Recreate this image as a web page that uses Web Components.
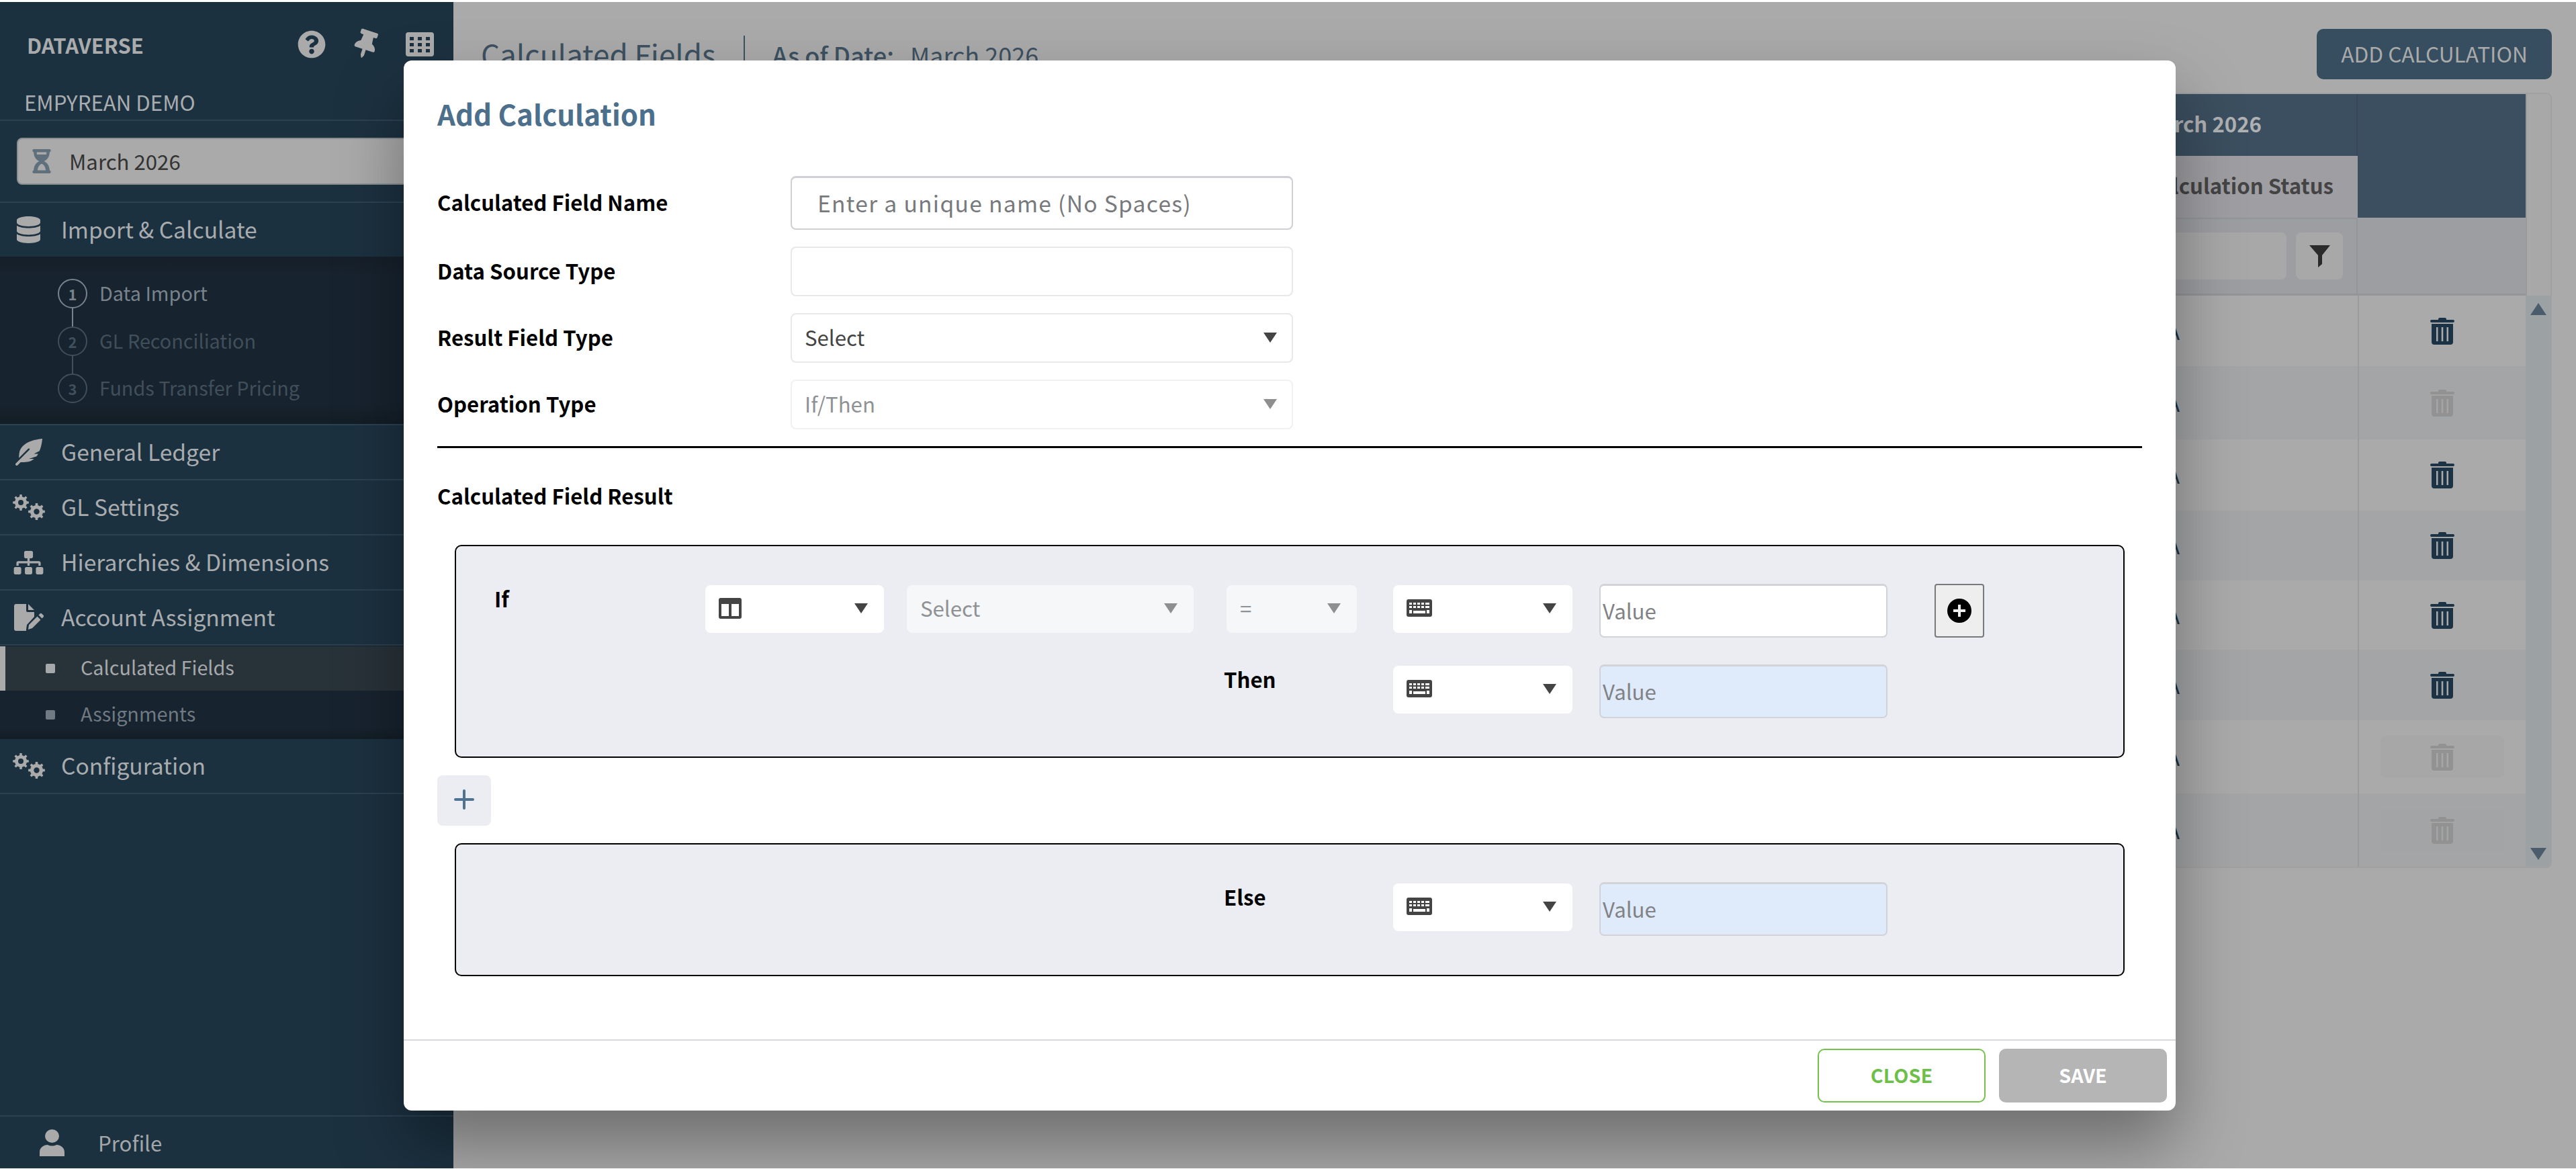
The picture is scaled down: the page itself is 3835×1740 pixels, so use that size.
<!DOCTYPE html>
<html>
<head>
<meta charset="utf-8">
<title>Calculated Fields</title>
<style>
html, body { margin: 0; height: 100%; background: #fff; overflow: hidden; }
body { font-family: "Noto Sans CJK SC", "Noto Sans", sans-serif; }
</style>
</head>
<body>
<app-shell></app-shell>

<script>
const FONT = '"Noto Sans CJK SC", "Noto Sans", sans-serif';

// toothed ring, used for the two sizes of the settings icon
const gear = (cx, cy, outer, inner, hole, teeth) => {
  let d = '';
  const step = Math.PI * 2 / teeth;
  for (let i = 0; i < teeth; i++) {
    const a = i * step;
    const pts = [[inner, a - step * .5], [inner, a - step * .27], [outer, a - step * .17], [outer, a + step * .17], [inner, a + step * .27]];
    for (const [r, t] of pts) {
      d += (d ? 'L' : 'M') + (cx + r * Math.cos(t)).toFixed(2) + ' ' + (cy + r * Math.sin(t)).toFixed(2);
    }
  }
  d += `ZM${cx + hole} ${cy}A${hole} ${hole} 0 1 0 ${cx - hole} ${cy}A${hole} ${hole} 0 1 0 ${cx + hole} ${cy}Z`;
  return d;
};

const icons = {
  help: '<svg viewBox="0 0 496 512" width="42" height="42"><path fill="currentColor" d="M504 256c0 137-111 248-248 248S8 393 8 256 119 8 256 8s248 111 248 248zM262.700 90c-54.500 0-89.300 23-116.600 63.800-3.500 5.300-2.400 12.400 2.700 16.300l34.700 26.300c5.200 3.900 12.600 3 16.700-2.100 17.900-22.700 30.100-35.800 57.300-35.800 20.400 0 45.700 13.100 45.700 33 0 15-12.400 22.700-32.600 34-23.600 13.200-54.800 29.700-54.800 70.900V300c0 6.600 5.400 12 12 12h56c6.600 0 12-5.400 12-12v-1.300c0-28.600 83.500-29.800 83.500-107.100C379.900 133.400 319.400 90 262.700 90zM256 339c-25.500 0-46.200 20.700-46.200 46.200s20.700 46.200 46.200 46.200 46.200-20.700 46.200-46.200S281.500 339 256 339z" transform="translate(-8 0)"/></svg>',
  pin: '<svg viewBox="0 0 384 512" width="33" height="42" style="transform:rotate(18deg)"><path fill="currentColor" d="M298 214.400 285.800 96H328c13.300 0 24-10.700 24-24V24c0-13.300-10.700-24-24-24H56C42.700 0 32 10.700 32 24v48c0 13.300 10.700 24 24 24h42.200L86 214.400C37.500 237 0 277.600 0 328c0 13.300 10.700 24 24 24h136v104c0 1.200.2 2.500.8 3.600l24 48c2.900 5.900 11.400 6 14.300 0l24-48c.6-1.100.8-2.400.9-3.600V352h136c13.300 0 24-10.700 24-24 0-50.900-38-91.200-86-113.600z"/></svg>',
  grid: '<svg viewBox="0 0 42 36" width="42" height="36"><path fill="currentColor" fill-rule="evenodd" d="M4 0h34a4 4 0 0 1 4 4v28a4 4 0 0 1-4 4H4a4 4 0 0 1-4-4V4a4 4 0 0 1 4-4zM6 7v5h6V7zm12 0v5h6V7zm12 0v5h6V7zM6 16v5h6v-5zm12 0v5h6v-5zm12 0v5h6v-5zM6 25v5h6v-5zm12 0v5h6v-5zm12 0v5h6v-5z"/></svg>',
  hourglass: '<svg viewBox="0 0 384 512" width="28" height="36"><path fill="currentColor" fill-rule="evenodd" d="M24 0h336c13.300 0 24 10.700 24 24v16c0 13.300-10.700 24-24 24 0 91-51 167.800-120.800 192C309 280.200 360 357 360 448c13.300 0 24 10.700 24 24v16c0 13.300-10.700 24-24 24H24c-13.300 0-24-10.700-24-24v-16c0-13.300 10.700-24 24-24 0-91 51-167.800 120.800-192C75 231.800 24 155 24 64 10.700 64 0 53.300 0 40V24C0 10.700 10.700 0 24 0zm64 64c0 17 2 33 5.600 48h196.800c3.600-15 5.600-31 5.600-48zm192 384c-6-62-44-136-88-136s-82 74-88 136z"/></svg>',
  db: '<svg viewBox="0 0 448 512" width="35" height="40"><path fill="currentColor" d="M448 73v46c0 40-100 73-224 73S0 159 0 119V73C0 33 100 0 224 0s224 33 224 73zm0 103v103c0 40-100 73-224 73S0 319 0 279V176c48 33 136 49 224 49s176-16 224-49zm0 160v103c0 40-100 73-224 73S0 479 0 439V336c48 33 136 49 224 49s176-16 224-49z"/></svg>',
  feather: '<svg viewBox="0 0 512 512" width="40" height="40"><path fill="currentColor" d="M512 0C460.220 3.560 96.440 38.200 71.010 287.610c-3.090 26.660-4.840 53.440-5.990 80.240l178.870-178.690c6.250-6.250 16.400-6.250 22.650 0s6.250 16.380 0 22.630L7.040 471.030c-9.380 9.370-9.380 24.570 0 33.940 9.380 9.370 24.590 9.370 33.980 0l57.130-57.070c42.090-.14 84.150-2.530 125.960-7.360 53.480-5.440 97.020-26.470 132.580-56.540H255.740l146.790-48.880c11.250-14.890 21.370-30.710 30.450-47.120h-81.140l106.540-53.210C500.290 132.860 510.190 26.260 512 0z"/></svg>',
  cogs: `<svg viewBox="0 0 48 38" width="48" height="38"><path fill="currentColor" fill-rule="evenodd" d="${gear(12, 12, 12, 9, 4, 8)}${gear(35.500, 25.500, 12.500, 9.500, 4.200, 8)}"/></svg>`,
  sitemap: '<svg viewBox="0 0 640 512" width="45" height="35"><path fill="currentColor" d="M128 352H32c-17.700 0-32 14.300-32 32v96c0 17.700 14.300 32 32 32h96c17.700 0 32-14.300 32-32v-96c0-17.700-14.300-32-32-32zm-24-80h192v48h48v-48h192v48h48v-57.600c0-21.200-17.200-38.400-38.400-38.400H344v-64h40c17.700 0 32-14.300 32-32V32c0-17.700-14.300-32-32-32H256c-17.700 0-32 14.300-32 32v96c0 17.700 14.300 32 32 32h40v64H94.400C73.200 224 56 241.200 56 262.400V320h48zm264 80h-96c-17.700 0-32 14.300-32 32v96c0 17.700 14.300 32 32 32h96c17.700 0 32-14.300 32-32v-96c0-17.700-14.300-32-32-32zm240 0h-96c-17.700 0-32 14.300-32 32v96c0 17.700 14.300 32 32 32h96c17.700 0 32-14.300 32-32v-96c0-17.700-14.300-32-32-32z"/></svg>',
  sign: '<svg viewBox="0 0 44 40" width="44" height="40"><path fill="currentColor" d="M3 0h15v10a2 2 0 0 0 2 2h10v7L19 31l-1 7 0 2H3a3 3 0 0 1-3-3V3a3 3 0 0 1 3-3zM21 0l9 9h-9zM38.500 14.500a2 2 0 0 1 2.800 0l2.200 2.200a2 2 0 0 1 0 2.800l-2 2-5-5zM34.500 18.500l5 5L27 36l-6 2 1-7z"/></svg>',
  person: '<svg viewBox="0 0 37 40" width="37" height="40"><ellipse cx="18.500" cy="10" rx="10.500" ry="10" fill="currentColor"/><path fill="currentColor" d="M0 40v-6c0-7 6-11 12-11 2 1 4 1.500 6.500 1.500S23 24 25 23c6 0 12 4 12 11v6z"/></svg>',
  table: '<svg viewBox="0 0 34 31" width="34" height="31"><path fill="currentColor" fill-rule="evenodd" d="M3 0h28a3 3 0 0 1 3 3v25a3 3 0 0 1-3 3H3a3 3 0 0 1-3-3V3a3 3 0 0 1 3-3zm1 9v18h11V9zm15 0v18h11V9z"/></svg>',
  keyboard: '<svg viewBox="0 0 38 26" width="38" height="26"><path fill="currentColor" fill-rule="evenodd" d="M3 0h32a3 3 0 0 1 3 3v20a3 3 0 0 1-3 3H3a3 3 0 0 1-3-3V3a3 3 0 0 1 3-3zM4 5v3h4V5zm6 0v3h4V5zm6 0v3h4V5zm6 0v3h4V5zm6 0v3h6V5zM4 10v3h4v-3zm6 0v3h4v-3zm6 0v3h4v-3zm6 0v3h4v-3zm6 0v3h6v-3zM4 16v5h4v-5zm6 1v4h18v-4zm20-1v5h4v-5z"/></svg>',
  funnel: '<svg viewBox="0 0 31 33" width="31" height="33"><path fill="currentColor" d="M0 0h31L19 15v13l-6 5V15z"/></svg>',
  trash: '<svg viewBox="0 0 36 40" width="36" height="40"><path fill="currentColor" fill-rule="evenodd" d="M12 2a2 2 0 0 1 2-2h8a2 2 0 0 1 2 2v1h10a2 2 0 0 1 2 2 2 2 0 0 1-2 2H2a2 2 0 0 1-2-2 2 2 0 0 1 2-2h10zM2 9h32v27a4 4 0 0 1-4 4H6a4 4 0 0 1-4-4zm7 5v21h2.500V14zm7.700 0v21h2.600V14zM24.500 14v21H27V14z"/></svg>',
  addCircle: '<svg viewBox="0 0 36 36" width="36" height="36"><path fill="currentColor" fill-rule="evenodd" d="M18 0a18 18 0 1 1 0 36 18 18 0 0 1 0-36zm-2 9v7H9v4h7v7h4v-7h7v-4h-7V9z"/></svg>',
  plus: '<svg viewBox="0 0 30 30" width="30" height="30"><path fill="none" stroke="currentColor" stroke-width="4" stroke-linecap="round" d="M15 2v26M2 15h26"/></svg>'
};

class NavItem extends HTMLElement {
  constructor() {
    super();
    const root = this.attachShadow({ mode: 'open' });
    root.innerHTML = `
<style>
:host { display: block; }
.row {
  height: ${this.hasAttribute('short') ? 80 : 82}px; box-sizing: border-box; display: flex; align-items: center;
  border-bottom: 2px solid #2c4252; background: #1c3140;
  color: #a8acae; font: 400 33.6px/1 ${FONT};
}
:host([short]) .row { border-bottom: 0; }
.ico { width: 91px; padding-right: 6px; box-sizing: border-box; display: flex; justify-content: center; color: #aaa; }
.txt { padding-bottom: 3px; }
</style>
<div class="row"><span class="ico">${icons[this.getAttribute('icon')]}</span><span class="txt"><slot></slot></span></div>`;
  }
}

class NavStep extends HTMLElement {
  constructor() {
    super();
    const root = this.attachShadow({ mode: 'open' });
    const last = this.hasAttribute('last');
    root.innerHTML = `
<style>
:host { display: block; height: 70.500px; }
.step { display: flex; height: 70px; padding-left: 86px; color: ${this.hasAttribute('off') ? '#414f5a' : '#79838b'}; position: relative; }
.num { width: 44px; height: 44px; box-sizing: border-box; border: 2px solid currentColor; border-radius: 50%;
  display: flex; align-items: center; justify-content: center; font: 700 22px/1 ${FONT}; }
.line { position: absolute; left: 107px; top: 43px; width: 2px; height: 28px; background: currentColor; display: ${last ? 'none' : 'block'}; }
.txt { margin-left: 18px; font: 400 28.8px/41px ${FONT}; }
</style>
<div class="step"><span class="num">${this.getAttribute('n')}</span><span class="line"></span><span class="txt"><slot></slot></span></div>`;
  }
}

class NavSub extends HTMLElement {
  constructor() {
    super();
    const root = this.attachShadow({ mode: 'open' });
    const on = this.hasAttribute('active');
    root.innerHTML = `
<style>
:host { display: block; }
.row { height: ${on ? 66 : 72}px; display: flex; align-items: center; padding-left: ${on ? 60 : 68}px; color: ${on ? '#a6a9ab' : '#6f7a82'};
  font: 400 28.8px/1 ${FONT}; background: ${on ? '#283239' : 'transparent'};
  border-left: ${on ? '8px solid #aaa' : '0'}; margin-top: ${on ? 1 : 0}px; }
.dot { width: 14px; height: 14px; border-radius: 2px; background: currentColor; margin-right: 38px; }
.txt { padding-bottom: 3px; }
</style>
<div class="row"><span class="dot"></span><span class="txt"><slot></slot></span></div>`;
  }
}

class SideBar extends HTMLElement {
  constructor() {
    super();
    const root = this.attachShadow({ mode: 'open' });
    root.innerHTML = `
<style>
:host { display: flex; flex-direction: column; width: 675px; flex: none; background: #1c3140; color: #aaa; }
.brand { height: 126px; box-sizing: border-box; display: flex; align-items: center; padding: 0 29px 0 40px; }
.brand b { font: 700 31px/1 ${FONT}; flex: 1; color: #a9abad; }
.brand span { display: flex; margin-left: 43px; }
.org { height: 51px; box-sizing: border-box; border-bottom: 2px solid #2c4252; padding-left: 36px; font: 400 31.2px/46px ${FONT}; color: #a9adaf; }
.date { height: 122px; box-sizing: border-box; border-bottom: 2px solid #2c4252; padding: 25px 0 0 25px; }
.date div { height: 70px; box-sizing: border-box; border: 2px solid #8a8f92; border-radius: 8px; background: #aaa;
  display: flex; align-items: center; color: #333; font: 400 31.2px/1 ${FONT}; padding-left: 21px; width: 700px; }
.date svg { color: #5f6f7b; margin-right: 27px; }
.dark { background: linear-gradient(#161f29, #17232f 12%, #17232f 88%, #131d25); }
.steps { height: 251px; box-sizing: border-box; padding-top: 33px; border-bottom: 2px solid #2c4252; }
.fill { flex: 1; }
.profile { height: 79px; box-sizing: border-box; border-top: 2px solid #2c4252; display: flex; align-items: center; padding-left: 59px; color: #a3a7a9; font: 400 31.2px/1 ${FONT}; }
.profile svg { margin-right: 50px; color: #aaa; }
</style>
<div class="brand"><b>DATAVERSE</b><span>${icons.help}</span><span>${icons.pin}</span><span>${icons.grid}</span></div>
<div class="org">EMPYREAN DEMO</div>
<div class="date"><div>${icons.hourglass}March 2026</div></div>
<nav-item icon="db" short>Import &amp; Calculate</nav-item>
<div class="dark steps">
  <nav-step n="1">Data Import</nav-step>
  <nav-step n="2" off>GL Reconciliation</nav-step>
  <nav-step n="3" off last>Funds Transfer Pricing</nav-step>
</div>
<nav-item icon="feather">General Ledger</nav-item>
<nav-item icon="cogs">GL Settings</nav-item>
<nav-item icon="sitemap">Hierarchies &amp; Dimensions</nav-item>
<nav-item icon="sign">Account Assignment</nav-item>
<div class="dark">
  <nav-sub active>Calculated Fields</nav-sub>
  <nav-sub>Assignments</nav-sub>
</div>
<nav-item icon="cogs">Configuration</nav-item>
<div class="fill"></div>
<div class="profile">${icons.person}Profile</div>`;
  }
}

class DataGrid extends HTMLElement {
  constructor() {
    super();
    const root = this.attachShadow({ mode: 'open' });
    const rows = [105, 109, 106, 104, 103, 105, 109, 109];
    const state = [1, 0, 1, 1, 1, 1, 0, 0];
    const body = rows.map((h, i) => `
<div class="tr ${i % 2 ? 'alt' : ''}" style="height:${h}px">
  <span class="val">N/A</span>
  <span class="act"><span class="tr-btn ${i > 5 ? 'box' : ''} ${state[i] ? '' : 'off'}">${icons.trash}</span></span>
</div>`).join('');
    root.innerHTML = `
<style>
:host { display: block; width: 3124px; box-sizing: border-box; border: 2px solid #a1a1a1; border-radius: 8px; overflow: hidden; }
.head { display: grid; grid-template-columns: 1fr 250px 37px; }
.h1 { background: #3b4f60; color: #b0b1b3; height: 92px; font: 700 31.2px/88px ${FONT}; text-align: right; padding-right: 141px; border-right: 2px solid #364859; box-sizing: border-box; }
.blue { background: #3b4f60; grid-row: span 2; }
.bar { background: #a8a8a8; grid-row: span 3; border-left: 2px solid #9a9a9a; }
.h2 { background: #9f9fa3; height: 92px; color: #444; font: 700 31.2px/88px ${FONT}; text-align: right; padding-right: 36px; box-sizing: border-box; }
.filter { background: #9d9ea2; height: 116px; display: flex; justify-content: flex-end; padding: 20px 20px 0 0; box-sizing: border-box; gap: 14px; border-top: 2px solid #949599; border-right: 2px solid #949599; border-bottom: 3px solid #949599; }
.filter i { width: 700px; height: 70px; background: #a8a8a8; border-radius: 8px; display: block; }
.filter b { width: 70px; height: 70px; background: #a8a8a8; border-radius: 8px; display: flex; align-items: center; justify-content: center; color: #2a2a2a; }
.fill2 { background: #9d9ea2; border-bottom: 3px solid #949599; }
.body { display: flex; }
.rows { flex: 1; }
.tr { display: flex; background: #aaa; }
.tr.alt { background: #a3a5a7; }
.val { flex: 1; display: flex; align-items: center; justify-content: flex-end; padding-right: 265px; font: 400 31.2px/1 ${FONT}; color: #1c3345; }
.act { width: 250px; border-left: 2px solid #9a9a9a; box-sizing: border-box; display: flex; align-items: center; justify-content: center; color: #1c3345; }
.tr-btn { display: flex; align-items: center; justify-content: center; width: 184px; height: 63px; border-radius: 8px; }
.tr-btn.off { color: #929292; }
.tr-btn.box { background: #a7a7a7; }
.alt .tr-btn.box { background: #a2a4a6; }
.track { width: 37px; background: #9ca1a4; display: flex; flex-direction: column; justify-content: space-between; align-items: center; padding: 11px 0 10px; box-sizing: border-box; }
.track span { width: 0; height: 0; border-left: 12px solid transparent; border-right: 12px solid transparent; }
.up { border-bottom: 18px solid #4b5d6d; }
.down { border-top: 18px solid #4b5d6d; }
</style>
<div class="head">
  <div class="h1">March 2026</div><div class="blue"></div><div class="bar"></div>
  <div class="h2">Calculation Status</div>
  <div class="filter"><i></i><b>${icons.funnel}</b></div><div class="fill2"></div>
</div>
<div class="body"><div class="rows">${body}</div><div class="track"><span class="up"></span><span class="down"></span></div></div>`;
  }
}

class MainPage extends HTMLElement {
  constructor() {
    super();
    const root = this.attachShadow({ mode: 'open' });
    root.innerHTML = `
<style>
:host { display: flex; flex-direction: column; flex: 1; min-width: 0; background: #aaa; padding-top: 40px; }
.top { height: 75px; display: flex; align-items: center; padding: 0 36px 0 41px; color: #3d5161; }
.title { font: 400 44px/1 ${FONT}; padding-bottom: 2px; }
.sep { width: 2px; height: 56px; background: #3d5161; margin: 0 41px; }
.k { font: 500 36px/1 ${FONT}; margin-right: 24px; }
.v { font: 400 36px/1 ${FONT}; flex: 1; }
.add { width: 350px; height: 75px; background: #364e60; border-radius: 10px; color: #aaa; font: 400 31.700px/72px ${FONT}; text-align: center; }
.wrap { padding-top: 20px; }
</style>
<div class="top"><span class="title">Calculated Fields</span><span class="sep"></span><span class="k">As of Date:</span><span class="v">March 2026</span><span class="add">ADD CALCULATION</span></div>
<div class="wrap"><data-grid></data-grid></div>`;
  }
}

class FormRow extends HTMLElement {
  constructor() {
    super();
    const root = this.attachShadow({ mode: 'open' });
    root.innerHTML = `
<style>
:host { display: flex; align-items: center; }
label { width: 526px; font: 700 31.2px/1 ${FONT}; color: #000; padding-bottom: 3px; }
</style>
<label>${this.getAttribute('label')}</label><slot></slot>`;
  }
}

class SelectBox extends HTMLElement {
  constructor() {
    super();
    const root = this.attachShadow({ mode: 'open' });
    const off = this.hasAttribute('disabled');
    const framed = this.hasAttribute('bordered');
    root.innerHTML = `
<style>
:host { display: block; flex: none; }
.box { display: flex; align-items: center; justify-content: space-between; box-sizing: border-box; height: 100%;
  border-radius: 8px; padding: 0 24px 0 20px; font: 400 31.2px/1 ${FONT};
  background: ${off && !framed ? '#f6f7f9' : '#fff'}; color: ${off ? '#8f9295' : '#444'}; }
.label { padding-bottom: 3px; display: flex; }
.arrow { width: 0; height: 0; border-left: 10px solid transparent; border-right: 10px solid transparent; border-top: 15px solid ${off ? '#8f8f8f' : '#444'}; margin-top: -2px; }
:host([bordered]) .box { border: 2px solid ${off ? '#f1f1f3' : '#e8e8ea'}; padding-left: 19px; padding-right: 22px; }
</style>
<div class="box"><span class="label"><slot></slot></span><span class="arrow"></span></div>`;
  }
}

class ValueBox extends HTMLElement {
  constructor() {
    super();
    const root = this.attachShadow({ mode: 'open' });
    root.innerHTML = `
<style>
:host { display: block; flex: none; width: 429px; height: 80px; }
.box { height: 100%; box-sizing: border-box; border: 2px solid #d1d3d8; border-top-width: 3px; border-radius: 7px; padding-left: 3px; padding-bottom: 1px;
  display: flex; align-items: center; font: 400 31.2px/1 ${FONT}; color: #808285; background: #fff; }
:host([tint]) .box { background: #dfeafb; }
</style>
<div class="box">Value</div>`;
  }
}

class CalcBlock extends HTMLElement {
  constructor() {
    super();
    const root = this.attachShadow({ mode: 'open' });
    root.innerHTML = `
<style>
:host { display: block; box-sizing: border-box; margin: 0 26px; background: #ecedf2; border: 2px solid #000; border-radius: 10px; }
</style>
<slot></slot>`;
  }
}

class AddModal extends HTMLElement {
  constructor() {
    super();
    const root = this.attachShadow({ mode: 'open' });
    root.innerHTML = `
<style>
:host { position: absolute; left: 601px; top: 87px; width: 2638px; height: 1563px; background: #fff; border-radius: 12px; display: flex; flex-direction: column; box-shadow: 0 50px 100px rgba(0,0,0,.36); }
.body { flex: 1; padding: 0 50px; }
h2 { margin: 0; font: 600 42px/1 ${FONT}; color: #4c6f8c; padding: 58px 0 0; height: 112px; box-sizing: border-box; }
.rows { display: flex; flex-direction: column; }
.name { width: 748px; height: 80px; box-sizing: border-box; border: 2px solid #cfd0d5; border-top-width: 3px; border-radius: 8px; padding: 0 0 2px 38px; display: flex; align-items: center; font: 400 33.6px/1 ${FONT}; letter-spacing: 1.3px; color: #77797c; }
.empty { width: 748px; height: 74px; box-sizing: border-box; border: 2px solid #e8e8ea; border-radius: 8px; }
select-box.wide { width: 748px; height: 74px; }
.r1 { margin-top: 60px; }
.r2, .r3, .r4 { margin-top: 25px; }
hr { border: 0; height: 3px; background: #000; margin: 25px 0 0; }
h3 { margin: 0; font: 700 31.2px/1 ${FONT}; color: #000; padding-top: 55px; height: 144px; box-sizing: border-box; }
.if { height: 317px; padding: 56px 0 0 57px; }
.else { height: 198px; padding: 56px 0 0 57px; }
.plus { width: 80px; height: 75px; background: #ecedf2; border-radius: 8px; margin: 26px 0; padding-bottom: 4px; box-sizing: border-box; display: flex; align-items: center; justify-content: center; color: #4f7391; }
footer { height: 106px; box-sizing: border-box; border-top: 2px solid #d8d8de; display: flex; justify-content: flex-end; gap: 20px; padding: 12px 13px 0 0; }
.btn { width: 250px; height: 80px; box-sizing: border-box; border-radius: 10px; font: 700 28.8px/1 ${FONT}; display: flex; align-items: center; justify-content: center; padding-bottom: 2px; }
.close { border: 2px solid #72c24b; color: #6cc04a; background: #fff; }
.save { background: #b5b5b5; color: #fff; }
</style>
<div class="body">
  <h2>Add Calculation</h2>
  <div class="rows">
    <form-row class="r1" label="Calculated Field Name"><div class="name">Enter a unique name (No Spaces)</div></form-row>
    <form-row class="r2" label="Data Source Type"><div class="empty"></div></form-row>
    <form-row class="r3" label="Result Field Type"><select-box class="wide" bordered>Select</select-box></form-row>
    <form-row class="r4" label="Operation Type"><select-box class="wide" bordered disabled>If/Then</select-box></form-row>
  </div>
  <hr>
  <h3>Calculated Field Result</h3>
  <calc-block class="if"><calc-if></calc-if></calc-block>
  <div class="plus">${icons.plus}</div>
  <calc-block class="else"><calc-else></calc-else></calc-block>
</div>
<footer><div class="btn close">CLOSE</div><div class="btn save">SAVE</div></footer>`;
  }
}

class CalcIf extends HTMLElement {
  constructor() {
    super();
    const root = this.attachShadow({ mode: 'open' });
    root.innerHTML = `
<style>
:host { display: grid; grid-template-columns: 314px 266px 34px 427px 49px 194px 54px 267px 40px 429px 70px 74px; grid-template-rows: 80px 80px; row-gap: 40px; }
.lab { font: 700 31.2px/1 ${FONT}; color: #000; padding-top: 6px; }
.then { margin-left: -4px; }
select-box { height: 71px; margin-top: 2px; }
.add { width: 74px; height: 80px; box-sizing: border-box; border: 2px solid #77797c; border-radius: 4px; background: #eee; display: flex; align-items: center; justify-content: center; color: #000; }
.key { color: #444; display: flex; }
</style>
<span class="lab">If</span>
<select-box><span class="key">${icons.table}</span></select-box><span></span>
<select-box disabled>Select</select-box><span></span>
<select-box disabled>=</select-box><span></span>
<select-box><span class="key">${icons.keyboard}</span></select-box><span></span>
<value-box></value-box><span></span>
<div class="add">${icons.addCircle}</div>
<span style="grid-column: 1 / span 5"></span>
<span class="lab then">Then</span><span></span>
<select-box><span class="key">${icons.keyboard}</span></select-box><span></span>
<value-box tint></value-box>`;
  }
}

class CalcElse extends HTMLElement {
  constructor() {
    super();
    const root = this.attachShadow({ mode: 'open' });
    root.innerHTML = `
<style>
:host { display: grid; grid-template-columns: 1086px 252px 267px 40px 429px; grid-template-rows: 80px; }
.lab { font: 700 31.2px/1 ${FONT}; color: #000; padding-top: 6px; }
select-box { height: 71px; margin-top: 2px; }
.key { color: #444; display: flex; }
</style>
<span></span><span class="lab">Else</span>
<select-box><span class="key">${icons.keyboard}</span></select-box><span></span>
<value-box tint></value-box>`;
  }
}

class AppShell extends HTMLElement {
  constructor() {
    super();
    const root = this.attachShadow({ mode: 'open' });
    root.innerHTML = `
<style>
:host { display: flex; position: relative; height: 1736px; margin-top: 3px; overflow: hidden; }
</style>
<side-bar></side-bar><main-page></main-page><add-modal></add-modal>`;
  }
}

customElements.define('nav-item', NavItem);
customElements.define('nav-step', NavStep);
customElements.define('nav-sub', NavSub);
customElements.define('side-bar', SideBar);
customElements.define('data-grid', DataGrid);
customElements.define('main-page', MainPage);
customElements.define('form-row', FormRow);
customElements.define('select-box', SelectBox);
customElements.define('value-box', ValueBox);
customElements.define('calc-block', CalcBlock);
customElements.define('calc-if', CalcIf);
customElements.define('calc-else', CalcElse);
customElements.define('add-modal', AddModal);
customElements.define('app-shell', AppShell);
</script>
</body>
</html>
